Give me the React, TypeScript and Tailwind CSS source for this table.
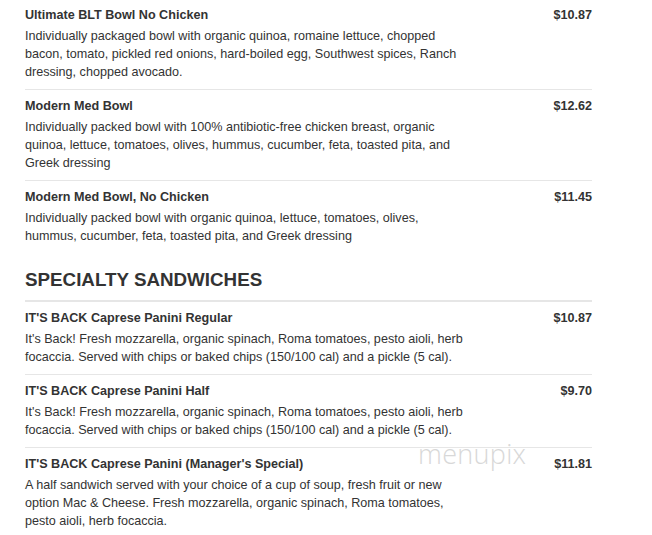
import React from "react";

type Item = { title: string; price: string; desc: string };

const bowls: Item[] = [
  {
    title: "Ultimate BLT Bowl No Chicken",
    price: "$10.87",
    desc: "Individually packaged bowl with organic quinoa, romaine lettuce, chopped bacon, tomato, pickled red onions, hard-boiled egg, Southwest spices, Ranch dressing, chopped avocado.",
  },
  {
    title: "Modern Med Bowl",
    price: "$12.62",
    desc: "Individually packed bowl with 100% antibiotic-free chicken breast, organic quinoa, lettuce, tomatoes, olives, hummus, cucumber, feta, toasted pita, and Greek dressing",
  },
  {
    title: "Modern Med Bowl, No Chicken",
    price: "$11.45",
    desc: "Individually packed bowl with organic quinoa, lettuce, tomatoes, olives, hummus, cucumber, feta, toasted pita, and Greek dressing",
  },
];

const sandwiches: Item[] = [
  {
    title: "IT'S BACK Caprese Panini Regular",
    price: "$10.87",
    desc: "It's Back! Fresh mozzarella, organic spinach, Roma tomatoes, pesto aioli, herb focaccia. Served with chips or baked chips (150/100 cal) and a pickle (5 cal).",
  },
  {
    title: "IT'S BACK Caprese Panini Half",
    price: "$9.70",
    desc: "It's Back! Fresh mozzarella, organic spinach, Roma tomatoes, pesto aioli, herb focaccia. Served with chips or baked chips (150/100 cal) and a pickle (5 cal).",
  },
  {
    title: "IT'S BACK Caprese Panini (Manager's Special)",
    price: "$11.81",
    desc: "A half sandwich served with your choice of a cup of soup, fresh fruit or new option Mac & Cheese. Fresh mozzarella, organic spinach, Roma tomatoes, pesto aioli, herb focaccia.",
  },
];

function Row({ item, first }: { item: Item; first: boolean }) {
  return (
    <div
      className={
        "flex justify-between pb-[8px] " +
        (first ? "pt-[6px]" : "pt-[7px] border-t border-[#e6e6e6]")
      }
    >
      <div className="w-[446px]">
        <div className="text-[12.6px] leading-[18px] font-bold text-[#333]">{item.title}</div>
        <div className="mt-[3px] text-[12.6px] leading-[18px] text-[#333]">{item.desc}</div>
      </div>
      <div className="text-[12.6px] leading-[18px] font-bold text-[#333] text-right">{item.price}</div>
    </div>
  );
}

export default function App() {
  return (
    <div
      className="relative w-[652px] h-[535px] bg-white overflow-hidden"
      style={{ fontFamily: '"Liberation Sans", Arial, Helvetica, sans-serif' }}
    >
      <div className="ml-[25px] w-[567px]">
        {bowls.map((it, i) => (
          <Row key={i} item={it} first={i === 0} />
        ))}
        <div className="pt-[15px] pb-[8px] border-b border-[#e6e6e6] text-[18.8px] leading-[24px] font-bold text-[#333]">
          SPECIALTY SANDWICHES
        </div>
        {sandwiches.map((it, i) => (
          <Row key={i} item={it} first={false} />
        ))}
      </div>
      <div
        className="absolute left-[418px] top-[434px] text-[27px] font-light tracking-[0.3px] text-[#d8d8d8] pointer-events-none"
        style={{ fontFamily: '"Open Sans", sans-serif' }}
      >
        menupix
      </div>
    </div>
  );
}
